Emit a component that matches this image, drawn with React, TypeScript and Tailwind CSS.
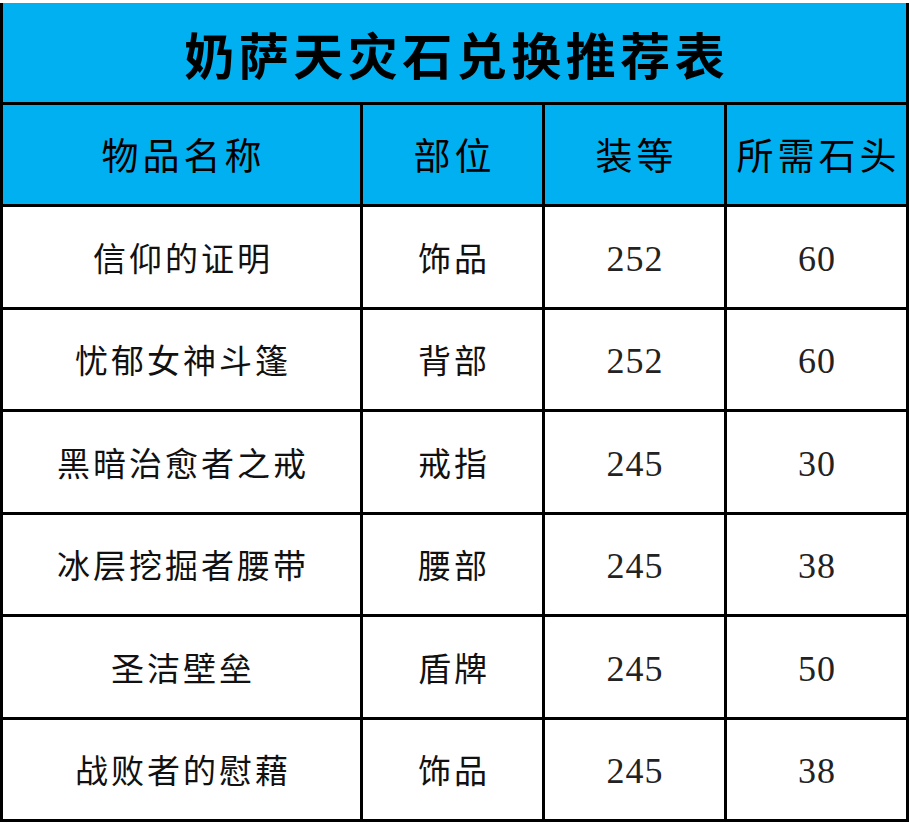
const rows = [
  { name: "信仰的证明", slot: "饰品", ilvl: "252", stones: "60" },
  { name: "忧郁女神斗篷", slot: "背部", ilvl: "252", stones: "60" },
  { name: "黑暗治愈者之戒", slot: "戒指", ilvl: "245", stones: "30" },
  { name: "冰层挖掘者腰带", slot: "腰部", ilvl: "245", stones: "38" },
  { name: "圣洁壁垒", slot: "盾牌", ilvl: "245", stones: "50" },
  { name: "战败者的慰藉", slot: "饰品", ilvl: "245", stones: "38" },
];

const headers = ["物品名称", "部位", "装等", "所需石头"];

const cjk = "font-['Liberation_Serif','Noto_Sans_CJK_SC',serif]";

export default function App() {
  return (
    <div className="w-[910px] h-[823px] bg-white pt-[3px]">
      <div className="w-[909px] border-x-[3px] border-black">
        {/* title */}
        <div className="h-[102px] bg-[#00b0f0] border-b-[3px] border-black flex items-center justify-center">
          <span className="font-['Noto_Sans_CJK_SC',sans-serif] font-bold text-[50px] tracking-[4.5px] pl-[4.5px] text-black leading-none">
            奶萨天灾石兑换推荐表
          </span>
        </div>

        {/* header row */}
        <div className="grid grid-cols-[360px_182px_182px_1fr] h-[102px] bg-[#00b0f0] border-b-[3px] border-black">
          {headers.map((h, i) => (
            <div
              key={h}
              className={`flex items-center justify-center pt-[5px] ${i < 3 ? "border-r-[3px] border-black" : ""}`}
            >
              <span className={`${cjk} text-[37px] tracking-[4px] pl-[4px] text-black leading-none`}>{h}</span>
            </div>
          ))}
        </div>

        {rows.map((r) => (
          <div key={r.name} className="grid grid-cols-[360px_182px_182px_1fr] h-[102.5px] border-b-[3px] border-black">
            <div className="flex items-center justify-center pt-[7px] border-r-[3px] border-black">
              <span className={`${cjk} text-[33px] tracking-[3px] pl-[3px] text-[#111] leading-none`}>{r.name}</span>
            </div>
            <div className="flex items-center justify-center pt-[7px] border-r-[3px] border-black">
              <span className={`${cjk} text-[33px] tracking-[3px] pl-[3px] text-[#111] leading-none`}>{r.slot}</span>
            </div>
            <div className="flex items-center justify-center pt-[4px] border-r-[3px] border-black">
              <span className={`${cjk} text-[36px] tracking-[1px] pl-[1px] text-[#222] leading-none`}>{r.ilvl}</span>
            </div>
            <div className="flex items-center justify-center pt-[4px]">
              <span className={`${cjk} text-[36px] tracking-[1px] pl-[1px] text-[#222] leading-none`}>{r.stones}</span>
            </div>
          </div>
        ))}
      </div>
    </div>
  );
}
